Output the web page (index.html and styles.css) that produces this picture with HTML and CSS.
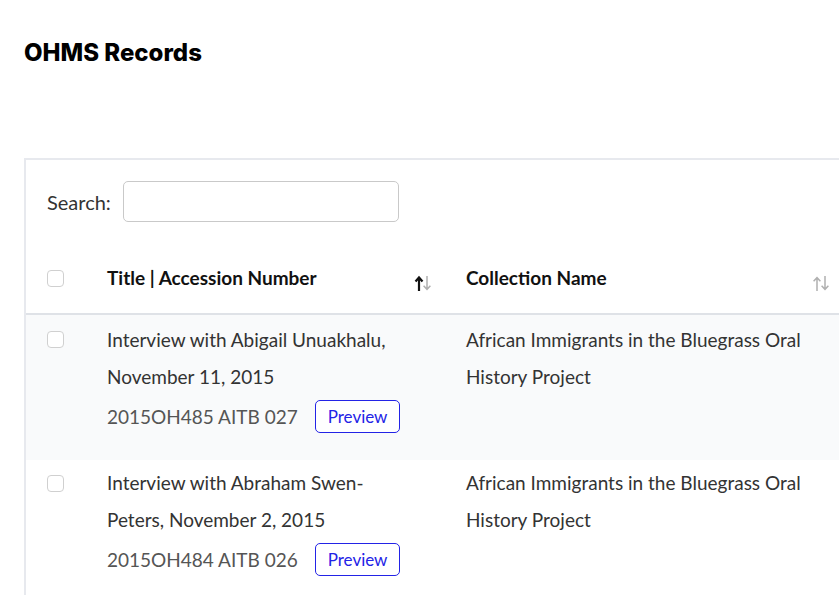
FILE: index.html
```html
<!DOCTYPE html>
<html>
<head>
<meta charset="utf-8">
<link rel="stylesheet" href="styles.css">
</head>
<body>
<div class="page">
  <h1 class="title">OHMS Records</h1>
  <div class="card">
    <div class="search">
      <label class="search-label">Search:</label>
      <input class="search-input" type="text">
    </div>
    <div class="table">
      <div class="row head">
        <div class="cell c1"><span class="check"></span></div>
        <div class="cell c2"><span class="htext">Title | Accession Number</span>
          <svg class="sort" width="18" height="17" viewBox="0 0 18 17"><path d="M5 16V3M1.5 6.5L5 2.5L8.5 6.5" stroke="#111" stroke-width="2.2" fill="none"/><path d="M13 1v13.5M9.6 10.8L13 14.3L16.4 10.8" stroke="#b0b0b0" stroke-width="1.5" fill="none"/></svg>
        </div>
        <div class="cell c3"><span class="htext">Collection Name</span>
          <svg class="sort" width="18" height="17" viewBox="0 0 18 17"><path d="M5 16V2.7M1.6 6.2L5 2.7L8.4 6.2" stroke="#b0b0b0" stroke-width="1.5" fill="none"/><path d="M13 1v13.5M9.6 10.8L13 14.3L16.4 10.8" stroke="#b0b0b0" stroke-width="1.5" fill="none"/></svg>
        </div>
      </div>
      <div class="row odd">
        <div class="cell c1"><span class="check"></span></div>
        <div class="cell c2">
          <div class="rtitle">Interview with Abigail Unuakhalu, November 11, 2015</div>
          <div class="acc"><span class="accno">2015OH485 AITB 027</span><button class="preview">Preview</button></div>
        </div>
        <div class="cell c3"><div class="coll">African Immigrants in the Bluegrass Oral History Project</div></div>
      </div>
      <div class="row even">
        <div class="cell c1"><span class="check"></span></div>
        <div class="cell c2">
          <div class="rtitle">Interview with Abraham Swen-Peters, November 2, 2015</div>
          <div class="acc"><span class="accno">2015OH484 AITB 026</span><button class="preview">Preview</button></div>
        </div>
        <div class="cell c3"><div class="coll">African Immigrants in the Bluegrass Oral History Project</div></div>
      </div>
    </div>
  </div>
</div>
</body>
</html>
```
FILE: styles.css
```css
html, body {
  margin: 0;
  padding: 0;
  background: #fff;
  overflow: hidden;
}
body {
  font-family: "Lato", "Noto Sans", sans-serif;
  color: #333;
}
.page {
  padding: 0 0 0 24px;
  width: 1000px;
}
.title {
  margin: 0;
  padding-top: 38px;
  height: 158px;
  box-sizing: border-box;
  font-family: "Inter", sans-serif;
  font-weight: 800;
  font-size: 24px;
  letter-spacing: 0;
  color: #000;
  line-height: 30px;
}
.card {
  border: 2px solid #e7e9ee;
  border-right: none;
  border-bottom: none;
  width: 900px;
}
.search {
  display: flex;
  align-items: center;
  padding: 21px 0 0 21px;
  height: 41px;
}
.search-label {
  font-size: 20px;
  color: #333;
  margin-right: 12px;
}
.search-input {
  width: 276px;
  height: 41px;
  box-sizing: border-box;
  border: 1px solid #c9c9c9;
  border-radius: 5px;
  margin: 0;
}
.table {
  margin-top: 18px;
}
.row {
  display: flex;
}
.cell {
  box-sizing: border-box;
}
.c1 {
  width: 81px;
  padding-left: 21px;
}
.c2 {
  width: 359px;
  padding-right: 59px;
}
.c3 {
  width: 390px;
  padding-right: 30px;
}
.check {
  display: block;
  width: 17px;
  height: 17px;
  box-sizing: border-box;
  border: 1px solid #d0d0d0;
  border-radius: 4px;
  background: #fff;
}
.head {
  height: 75px;
  border-bottom: 2px solid #dfe2e7;
  box-sizing: border-box;
}
.head .c1 {
  padding-top: 30px;
}
.head .c2, .head .c3 {
  display: flex;
  justify-content: space-between;
  padding-top: 19px;
}
.head .c2 {
  padding-right: 34px;
}
.htext {
  font-size: 19px;
  font-weight: 700;
  color: #111;
  line-height: 37px;
}
.sort {
  margin-top: 16px;
}
.head .c3 .sort {
  margin-right: -4px;
}
.odd {
  background: #f9fafb;
  height: 145px;
}
.even {
  background: #fff;
  height: 145px;
}
.odd .c1, .even .c1 {
  padding-top: 16px;
}
.odd .cell.c2, .odd .cell.c3 {
  padding-top: 6px;
}
.even .cell.c1 {
  padding-top: 15px;
}
.even .cell.c2, .even .cell.c3 {
  padding-top: 4px;
}
.rtitle, .coll {
  font-size: 19px;
  line-height: 37px;
  color: #333;
}
.acc {
  display: flex;
  align-items: center;
  margin-top: 5px;
}
.accno {
  font-size: 19px;
  color: #555;
  margin-right: 17px;
}
.preview {
  font-family: "Lato", "Noto Sans", sans-serif;
  font-size: 17px;
  color: #2323e6;
  background: #fff;
  border: 1.5px solid #2323e6;
  border-radius: 5px;
  height: 33px;
  padding: 0 12px;
  margin: 0;
}
```
